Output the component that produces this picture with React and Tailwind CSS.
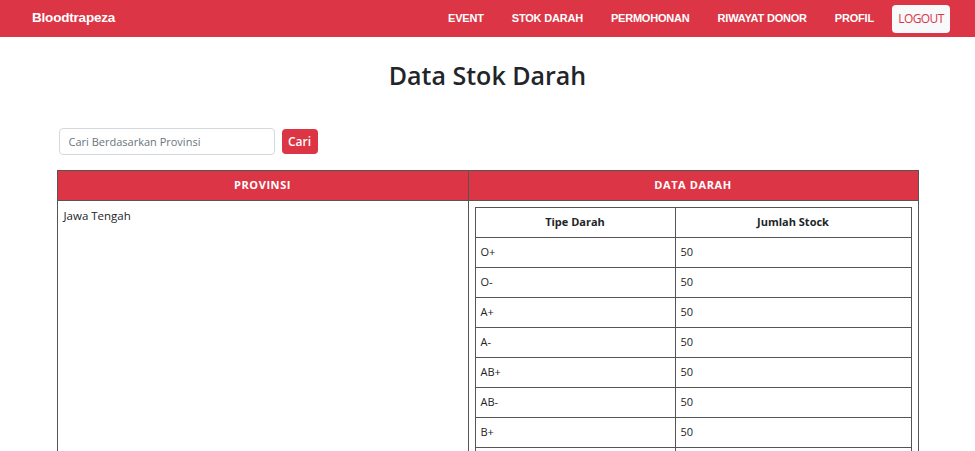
import { useState } from 'react'

const stok = [
    { tipe: 'O+', jumlah: 50 },
    { tipe: 'O-', jumlah: 50 },
    { tipe: 'A+', jumlah: 50 },
    { tipe: 'A-', jumlah: 50 },
    { tipe: 'AB+', jumlah: 50 },
    { tipe: 'AB-', jumlah: 50 },
    { tipe: 'B+', jumlah: 50 },
    { tipe: 'B-', jumlah: 50 },
]

const menu = ['EVENT', 'STOK DARAH', 'PERMOHONAN', 'RIWAYAT DONOR', 'PROFIL']

const Navbar = () => {
    return (
        <nav className="h-[37px] bg-[#dc3545] flex items-center justify-between pl-[32px] pr-[25px] font-['Liberation_Sans',Arial,sans-serif] text-white">
            <a href="#" className="font-bold text-[13.5px] tracking-[-0.2px]">Bloodtrapeza</a>
            <div className="flex items-center">
                {menu.map((item) => (
                    <a key={item} href="#" className="font-bold text-[11px] tracking-[-0.2px] mr-[28px]">{item}</a>
                ))}
                <button className="h-[28px] w-[58px] -ml-[10px] bg-[#f8f9fa] text-[#dc3545] rounded-[4px] text-[12px] font-['Open_Sans',sans-serif] tracking-[-0.6px]">
                    LOGOUT
                </button>
            </div>
        </nav>
    )
}

const Search = () => {
    const [q, setQ] = useState('')
    return (
        <div className="flex items-center gap-[7px] ml-[2px]">
            <input
                value={q}
                onChange={(e) => setQ(e.target.value)}
                placeholder="Cari Berdasarkan Provinsi"
                className="w-[216px] h-[27px] px-[9px] border border-[#d5d8dc] rounded-[4px] text-[11px] text-[#333] placeholder:text-[#6c757d] outline-none"
            />
            <button className="w-[36px] h-[25px] bg-[#dc3545] text-white text-[12px] font-semibold rounded-[4px]">Cari</button>
        </div>
    )
}

const StokTable = () => {
    return (
        <table className="w-full border-collapse border border-[#555] text-[11.5px] text-[#212529]">
            <thead>
                <tr className="h-[30px] bg-[#dc3545] text-white">
                    <th className="w-[411px] border border-[#555] font-bold tracking-[0.6px] text-[11px]">PROVINSI</th>
                    <th className="border border-[#555] font-bold tracking-[0.6px] text-[11px]">DATA DARAH</th>
                </tr>
            </thead>
            <tbody>
                <tr>
                    <td className="border border-[#555] align-top pl-[6px] pt-[6px]">Jawa Tengah</td>
                    <td className="border border-[#555] align-top p-[6px]">
                        <table className="w-full border-collapse border border-[#555]">
                            <thead>
                                <tr className="h-[30px]">
                                    <th className="w-[200px] border border-[#555] font-bold text-[11px]">Tipe Darah</th>
                                    <th className="border border-[#555] font-bold text-[11px]">Jumlah Stock</th>
                                </tr>
                            </thead>
                            <tbody>
                                {stok.map((s) => (
                                    <tr key={s.tipe} className="h-[30px]">
                                        <td className="border border-[#555] pl-[5px] text-[11px]">{s.tipe}</td>
                                        <td className="border border-[#555] pl-[5px] text-[11px]">{s.jumlah}</td>
                                    </tr>
                                ))}
                            </tbody>
                        </table>
                    </td>
                </tr>
            </tbody>
        </table>
    )
}

export default function App() {
    return (
        <div className="min-h-screen bg-white font-['Open_Sans','Noto_Sans',sans-serif]">
            <Navbar />
            <div className="w-[862px] mx-auto">
                <h1 className="mt-[18px] text-center text-[25px] font-semibold text-[#212529] leading-[40px]">Data Stok Darah</h1>
                <div className="mt-[33px]">
                    <Search />
                </div>
                <div className="mt-[15px]">
                    <StokTable />
                </div>
            </div>
        </div>
    )
}
